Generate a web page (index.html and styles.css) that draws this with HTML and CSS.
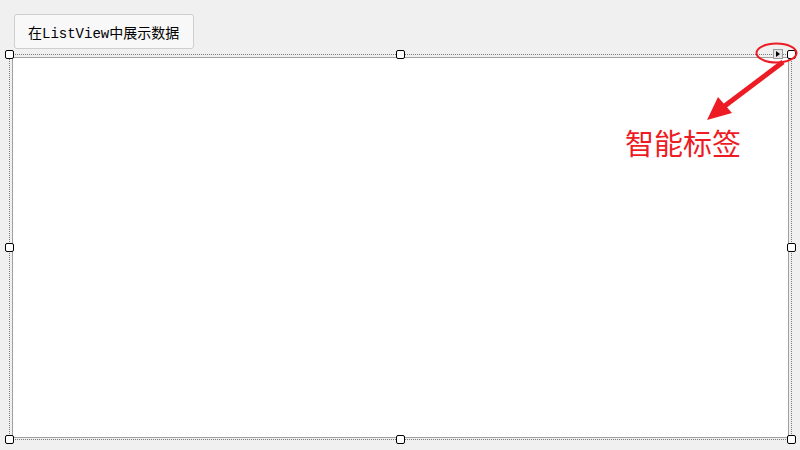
FILE: index.html
```html
<!DOCTYPE html>
<html lang="zh-CN">

<head>
  <meta charset="UTF-8">
  <title>ListView 智能标签</title>
  <link rel="stylesheet" href="styles.css">
</head>

<body>
  <div class="designer">
    <div class="toolbar">
      <button class="show-btn">在ListView中展示数据</button>
    </div>

    <!-- 选中的 ListView 控件 -->
    <div class="selection">
      <div class="listview"></div>

      <span class="handle tl"></span>
      <span class="handle tm"></span>
      <span class="handle tr"></span>
      <span class="handle ml"></span>
      <span class="handle mr"></span>
      <span class="handle bl"></span>
      <span class="handle bm"></span>
      <span class="handle br"></span>

      <span class="smart-tag"></span>
    </div>

    <!-- 标注 -->
    <svg class="callout" width="800" height="450" viewBox="0 0 800 450">
      <ellipse cx="776.5" cy="53" rx="20" ry="9.5" fill="none" stroke="#ed1c24" stroke-width="2" />
      <line x1="783" y1="62" x2="722" y2="108" stroke="#ed1c24" stroke-width="5" />
      <polygon points="707,120 718,97 732,113" fill="#ed1c24" />
    </svg>
    <div class="callout-text">智能标签</div>
  </div>
</body>

</html>
```

FILE: styles.css
```css
body {
  margin: 0;
  background-color: #f0f0f0;
  font-family: "Liberation Mono", "Noto Sans CJK SC", monospace;
}

.designer {
  position: relative;
  width: 800px;
  height: 450px;
  overflow: hidden;
}

.toolbar {
  padding: 14px 0 0 14px;
}

.show-btn {
  display: block;
  width: 180px;
  height: 35px;
  padding: 0 0 0 13px;
  text-align: left;
  background-color: #f8f8f8;
  border: 1px solid #cfcfcf;
  border-radius: 3px;
  font-family: "Liberation Mono", "Noto Sans CJK SC", monospace;
  font-size: 14px;
  color: #000;
}

.selection {
  position: relative;
  margin: 5px 0 0 9px;
  width: 783px;
  height: 386px;
  box-sizing: border-box;
  border: 1px dotted #7a7a7a;
  padding: 2px 2px 1px 2px;
}

.listview {
  height: 100%;
  box-sizing: border-box;
  background-color: #fff;
  border: 1px solid #a0a0a0;
}

.handle {
  position: absolute;
  width: 9px;
  height: 9px;
  box-sizing: border-box;
  background-color: #fff;
  border: 1.5px solid #000;
  border-radius: 2px;
}

.tl { left: -5px; top: -5px; }
.tm { left: 386px; top: -5px; }
.tr { right: -5px; top: -5px; }
.ml { left: -5px; top: 188px; }
.mr { right: -5px; top: 188px; }
.bl { left: -5px; bottom: -5px; }
.bm { left: 386px; bottom: -5px; }
.br { right: -5px; bottom: -5px; }

.smart-tag {
  position: absolute;
  right: 8px;
  top: -6px;
  width: 10px;
  height: 10px;
  box-sizing: border-box;
  background-color: #e4e4e4;
  border: 1px solid #9a9a9a;
}

.smart-tag::after {
  content: "";
  position: absolute;
  left: 2px;
  top: 1px;
  border-left: 4px solid #000;
  border-top: 3.5px solid transparent;
  border-bottom: 3.5px solid transparent;
}

.callout {
  position: absolute;
  left: 0;
  top: 0;
  pointer-events: none;
}

.callout-text {
  position: absolute;
  left: 625px;
  top: 122px;
  font-family: "Noto Sans CJK SC", sans-serif;
  font-size: 29px;
  line-height: 40px;
  color: #ed1c24;
}
```
